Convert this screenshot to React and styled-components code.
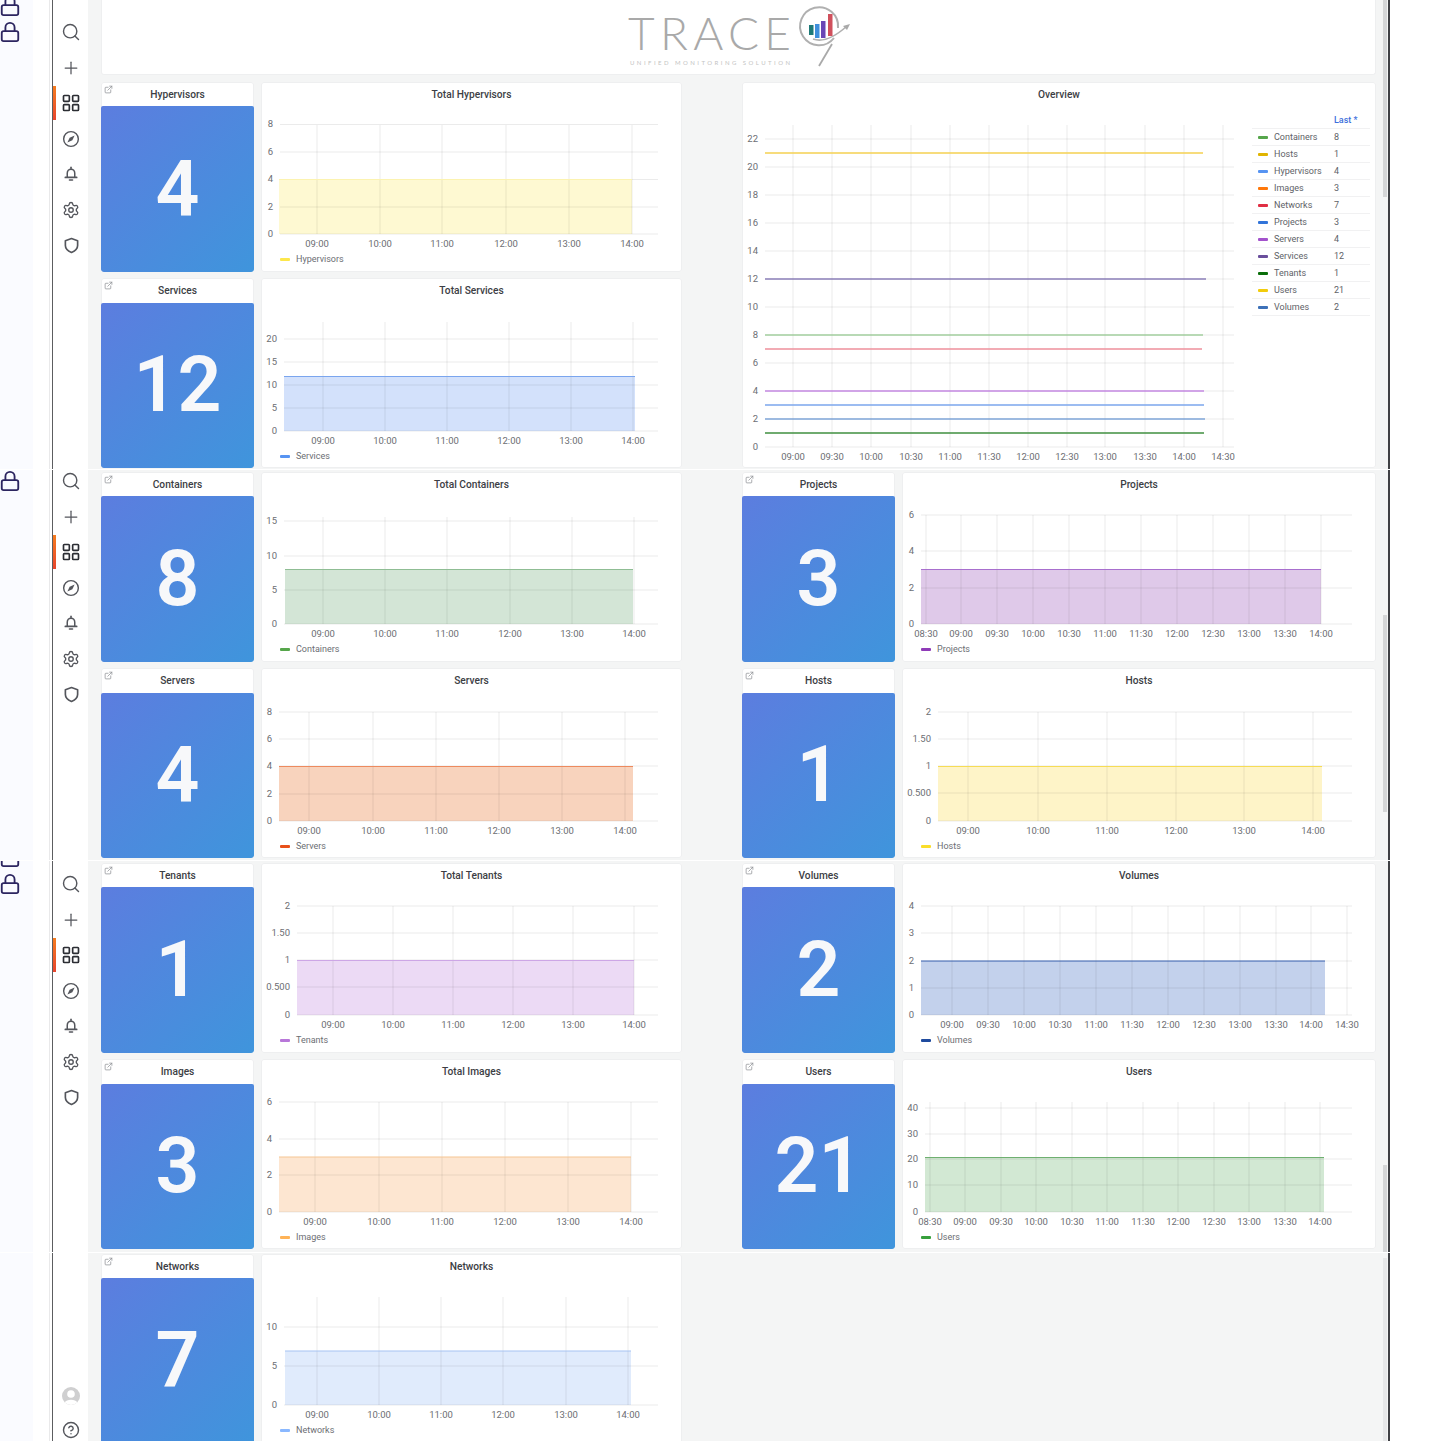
import React from "react";
import styled, { createGlobalStyle } from "styled-components";
import {
  Search,
  Plus,
  LayoutGrid,
  Settings,
  Lock,
  ExternalLink,
  CircleHelp,
} from "lucide-react";

const GlobalStyle = createGlobalStyle`
  html, body {
    margin: 0;
    background: #fff;
    font-family: Roboto, "Liberation Sans", sans-serif;
  }
  #root {
    height: 1441px;
    overflow: hidden;
  }
`;

const Section = styled.section`
  display: flex;
  box-sizing: border-box;
  width: 1430px;
  height: ${(p) => p.$height}px;
  overflow: hidden;
  border-top: ${(p) => (p.$divider ? "1px solid #fff" : "none")};
`;

const LockStrip = styled.div`
  flex: none;
  display: flex;
  flex-direction: column;
  gap: ${(p) => p.$gap || 0}px;
  box-sizing: border-box;
  width: 33px;
  margin-top: ${(p) => p.$offset || 0}px;
  color: #2c2560;
  background: #fafbff;
  svg {
    display: block;
    margin-left: -1px;
  }
`;

const Gutter = styled.div`
  flex: none;
  width: 19px;
  background: #fff linear-gradient(#e9e9ea, #e9e9ea) 16px 0 / 1px 100% no-repeat;
`;

const Sidebar = styled.nav`
  flex: none;
  display: flex;
  flex-direction: column;
  gap: 13.5px;
  box-sizing: border-box;
  width: 36px;
  padding-top: ${(p) => p.$top}px;
  background: #fff;
  border-left: 1.5px solid #5c5d60;
`;

const NavItem = styled.div`
  position: relative;
  display: flex;
  align-items: center;
  justify-content: center;
  height: 22px;
  color: ${(p) => (p.$active ? "#2b2d33" : "#54565c")};
  margin-right: -1px;

  ${(p) =>
    p.$active &&
    `&::before {
      content: "";
      position: absolute;
      left: 0;
      top: -6px;
      width: 3px;
      height: 34px;
      background: linear-gradient(#f57c1f, #e8452e);
    }`}
`;

const Main = styled.main`
  position: relative;
  flex: none;
  box-sizing: border-box;
  width: 1300px;
  padding: ${(p) => p.$top}px 12px 0 13px;
  background: #f4f5f5;
`;

const RightEdge = styled.div`
  flex: none;
  width: 1.5px;
  background: #3f4044;
`;

const Scrollbar = styled.div`
  position: absolute;
  right: 1px;
  top: ${(p) => p.$top}px;
  width: 4.5px;
  height: ${(p) => p.$height}px;
  background: ${(p) => p.$color || "#d5d6d7"};
`;

const Banner = styled.header`
  display: flex;
  justify-content: center;
  box-sizing: border-box;
  height: 75px;
  margin-bottom: 7px;
  background: #fff;
  border: 1px solid #eeeff0;
  border-top: none;
  border-radius: 0 0 3px 3px;
`;

const Dashboard = styled.div`
  display: grid;
  grid-template-columns: 581px 634px;
  column-gap: 60px;
`;

const Stack = styled.div`
  display: flex;
  flex-direction: column;
  gap: 6px;
`;

const MetricRow = styled.div`
  display: flex;
  gap: 7px;
  height: 190px;
`;

const Panel = styled.article`
  position: relative;
  display: flex;
  flex-direction: column;
  box-sizing: border-box;
  background: #fff;
  border-radius: 3px;
  box-shadow: 0 0 0 1px #eeeff0 inset;
  overflow: hidden;
`;

const StatPanel = styled(Panel)`
  flex: none;
  width: 153px;
`;

const ChartPanel = styled(Panel)`
  flex: 1;
  min-width: 0;
  svg {
    display: block;
  }
`;

const OverviewPanel = styled(Panel)`
  height: 386px;
`;

const PanelTitle = styled.h3`
  flex: none;
  margin: 0;
  height: ${(p) => (p.$tall ? 25 : 24)}px;
  line-height: 25px;
  text-align: center;
  font-size: 10.2px;
  font-weight: 500;
  color: #3c3e44;
`;

const LinkMark = styled.span`
  position: absolute;
  left: 3px;
  top: 3px;
  color: #8f9195;
  line-height: 0;
`;

const StatBlock = styled.div`
  flex: 1;
  display: flex;
  align-items: center;
  justify-content: center;
  border-radius: 2px;
  background: linear-gradient(135deg, #5c7ddf 0%, #3f95dc 100%);
  color: #f7f8fa;
  font-size: 77px;
  font-weight: 600;
  line-height: 1;
`;

const AxisText = styled.text`
  font-family: Roboto, "Liberation Sans", sans-serif;
  font-size: 9.5px;
  fill: #6c6e73;
`;

const KeyText = styled(AxisText)`
  font-size: 9px;
`;

const OverviewBody = styled.div`
  flex: 1;
  display: flex;
  min-height: 0;
  svg {
    flex: none;
    display: block;
  }
`;

const LegendTable = styled.div`
  flex: none;
  width: 118px;
  margin-left: 7px;
  padding-top: 6px;
  font-size: 9px;
  color: #606267;
`;

const LegendHead = styled.div`
  height: 16px;
  line-height: 16px;
  padding-left: 82px;
  color: #3d6fdc;
  font-weight: 500;
`;

const LegendRow = styled.div`
  display: flex;
  align-items: center;
  box-sizing: border-box;
  height: 17px;
  border-top: 1px solid #f1f1f2;
  &:last-child {
    border-bottom: 1px solid #f1f1f2;
    height: 18px;
  }
`;

const Swatch = styled.i`
  flex: none;
  width: 10px;
  height: 3px;
  margin: 0 6px;
  border-radius: 1px;
  background: ${(p) => p.$color};
`;

const LegendName = styled.span`
  width: 60px;
`;

const AvatarCircle = styled.span`
  display: block;
  line-height: 0;
`;

const clockTicks = (labels, xs) => labels.map((label, i) => [label, xs[i]]);

const HOURS = ["09:00", "10:00", "11:00", "12:00", "13:00", "14:00"];
const HALF_HOURS = ["08:30", "09:00", "09:30", "10:00", "10:30", "11:00", "11:30", "12:00", "12:30", "13:00", "13:30", "14:00"];
const VOLUME_HOURS = ["09:00", "09:30", "10:00", "10:30", "11:00", "11:30", "12:00", "12:30", "13:00", "13:30", "14:00", "14:30"];

const CHARTS = {
  hypervisors: {
    title: "Total Hypervisors", stat: "Hypervisors", value: "4", legend: "Hypervisors",
    origin: [261, 82], width: 421, left: 280, top: 125,
    y: [["8", 124.5], ["6", 152], ["4", 179.5], ["2", 207], ["0", 234]],
    x: clockTicks(HOURS, [317, 380, 442, 506, 569, 632]),
    area: [279, 632, 179.5, 234], fill: "#fef9d2", line: "#fcf3b0", key: "#fde74c",
  },
  services: {
    title: "Total Services", stat: "Services", value: "12", legend: "Services", tall: true,
    origin: [261, 278], width: 421, left: 284, top: 322,
    y: [["20", 339], ["15", 362], ["10", 385], ["5", 408], ["0", 431]],
    x: clockTicks(HOURS, [323, 385, 447, 509, 571, 633]),
    area: [284, 635, 376.5, 431], fill: "#d3e1fb", line: "#7aa5ee", key: "#5794f2",
  },
  containers: {
    title: "Total Containers", stat: "Containers", value: "8", legend: "Containers",
    origin: [261, 472], width: 421, left: 284, top: 517,
    y: [["15", 521], ["10", 556], ["5", 590], ["0", 624]],
    x: clockTicks(HOURS, [323, 385, 447, 510, 572, 634]),
    area: [285, 633, 569.5, 624], fill: "#d3e5d6", line: "#8fbd94", key: "#56a64b",
  },
  servers: {
    title: "Servers", stat: "Servers", value: "4", legend: "Servers", tall: true,
    origin: [261, 668], width: 421, left: 279, top: 712,
    y: [["8", 712], ["6", 739], ["4", 766], ["2", 794], ["0", 821]],
    x: clockTicks(HOURS, [309, 373, 436, 499, 562, 625]),
    area: [279, 633, 766.5, 821], fill: "#f8d3bd", line: "#ed8a5e", key: "#e8501a",
  },
  tenants: {
    title: "Total Tenants", stat: "Tenants", value: "1", legend: "Tenants",
    origin: [261, 863], width: 421, left: 297, top: 906,
    y: [["2", 906], ["1.50", 933], ["1", 960], ["0.500", 987], ["0", 1015]],
    x: clockTicks(HOURS, [333, 393, 453, 513, 573, 634]),
    area: [297, 634, 960.5, 1015], fill: "#ecdaf5", line: "#cda6e6", key: "#b877d9",
  },
  images: {
    title: "Total Images", stat: "Images", value: "3", legend: "Images", tall: true,
    origin: [261, 1059], width: 421, left: 279, top: 1102,
    y: [["6", 1102], ["4", 1139], ["2", 1175], ["0", 1212]],
    x: clockTicks(HOURS, [315, 379, 442, 505, 568, 631]),
    area: [279, 631, 1157, 1212], fill: "#fde6d1", line: "#f5c593", key: "#ffb357",
  },
  networks: {
    title: "Networks", stat: "Networks", value: "7", legend: "Networks",
    origin: [261, 1254], width: 421, left: 284, top: 1297,
    y: [["10", 1327], ["5", 1366], ["0", 1405]],
    x: clockTicks(HOURS, [317, 379, 441, 503, 566, 628]),
    area: [285, 631, 1351, 1405], fill: "#e0ebfc", line: "#a5c3f2", key: "#8ab8ff",
  },
  projects: {
    title: "Projects", stat: "Projects", value: "3", legend: "Projects",
    origin: [902, 472], width: 474, left: 921, top: 515,
    y: [["6", 515], ["4", 551], ["2", 588], ["0", 624]],
    x: clockTicks(HALF_HOURS, [926, 961, 997, 1033, 1069, 1105, 1141, 1177, 1213, 1249, 1285, 1321]),
    area: [921, 1321, 569.5, 624], fill: "#dfc9e9", line: "#a86fce", key: "#8f3bb8",
  },
  hosts: {
    title: "Hosts", stat: "Hosts", value: "1", legend: "Hosts", tall: true,
    origin: [902, 668], width: 474, left: 938, top: 712,
    y: [["2", 712], ["1.50", 739], ["1", 766], ["0.500", 793], ["0", 821]],
    x: clockTicks(HOURS, [968, 1038, 1107, 1176, 1244, 1313]),
    area: [938, 1322, 766.5, 821], fill: "#fef4c8", line: "#f6dc55", key: "#fade2a",
  },
  volumes: {
    title: "Volumes", stat: "Volumes", value: "2", legend: "Volumes",
    origin: [902, 863], width: 474, left: 921, top: 906,
    y: [["4", 906], ["3", 933], ["2", 961], ["1", 988], ["0", 1015]],
    x: clockTicks(VOLUME_HOURS, [952, 988, 1024, 1060, 1096, 1132, 1168, 1204, 1240, 1276, 1311, 1347]),
    area: [921, 1325, 961, 1015], fill: "#c3d1ec", line: "#3d65b3", key: "#1f4b9e",
  },
  users: {
    title: "Users", stat: "Users", value: "21", legend: "Users", tall: true,
    origin: [902, 1059], width: 474, left: 925, top: 1102,
    y: [["40", 1108], ["30", 1134], ["20", 1159], ["10", 1185], ["0", 1212]],
    x: clockTicks(HALF_HOURS, [930, 965, 1001, 1036, 1072, 1107, 1143, 1178, 1214, 1249, 1285, 1320]),
    area: [925, 1324, 1157.5, 1212], fill: "#d2e8d3", line: "#6fb070", key: "#37a03c",
  },
};

const OVERVIEW_SERIES = [
  ["Containers", "8", "#56a64b"],
  ["Hosts", "1", "#e0b400"],
  ["Hypervisors", "4", "#5794f2"],
  ["Images", "3", "#ff780a"],
  ["Networks", "7", "#e02f44"],
  ["Projects", "3", "#3274d9"],
  ["Servers", "4", "#a352cc"],
  ["Services", "12", "#6a4f9c"],
  ["Tenants", "1", "#0a6e0a"],
  ["Users", "21", "#f2cc0c"],
  ["Volumes", "2", "#3d71b8"],
];

const OVERVIEW_LINES = [
  [153, 1203, "#f5d050"],
  [279, 1206, "#8b7fb8"],
  [335, 1203, "#a3cf9f"],
  [349, 1202, "#ee8f9b"],
  [391, 1204, "#c588e2"],
  [405, 1204, "#7ba6ec"],
  [419, 1205, "#7fa6d8"],
  [433, 1204, "#3f8f3f"],
];

const GRID = "rgba(0,0,0,0.08)";

const AreaChart = ({ chart }) => {
  const [ox, oy] = chart.origin;
  const [x0, x1, top, bottom] = chart.area;
  const plotBottom = chart.y[chart.y.length - 1][1];
  const right = chart.width === 421 ? 658 : 1352;
  return (
    <svg width={chart.width} height="166" viewBox={`${ox} ${oy + 24} ${chart.width} 166`}>
      <rect x={x0} y={top} width={x1 - x0} height={bottom - top} fill={chart.fill} />
      {chart.y.map(([label, y]) => (
        <g key={label}>
          <line x1={chart.left} x2={right} y1={y} y2={y} stroke={GRID} />
          <AxisText x={chart.left - 7} y={y + 2.5} textAnchor="end">{label}</AxisText>
        </g>
      ))}
      {chart.x.map(([label, x]) => (
        <g key={label}>
          <line x1={x} x2={x} y1={chart.top} y2={plotBottom} stroke={GRID} />
          <AxisText x={x} y={bottom + 13} textAnchor="middle">{label}</AxisText>
        </g>
      ))}
      <line x1={x0} x2={x1} y1={top} y2={top} stroke={chart.line} />
      <rect x={ox + 19} y={bottom + 24} width="10" height="3" rx="1" fill={chart.key} />
      <KeyText x={ox + 35} y={bottom + 28}>{chart.legend}</KeyText>
    </svg>
  );
};

const OverviewChart = () => {
  const yLabels = [22, 20, 18, 16, 14, 12, 10, 8, 6, 4, 2, 0];
  const xLabels = clockTicks(VOLUME_HOURS, [793, 832, 871, 911, 950, 989, 1028, 1067, 1105, 1145, 1184, 1223]);
  return (
    <svg width="503" height="362" viewBox="742 106 503 362">
      {yLabels.map((label, i) => (
        <g key={label}>
          <line x1="765" x2="1234" y1={139 + i * 28} y2={139 + i * 28} stroke={GRID} />
          <AxisText x="758" y={141.5 + i * 28} textAnchor="end">{label}</AxisText>
        </g>
      ))}
      {xLabels.map(([label, x]) => (
        <g key={label}>
          <line x1={x} x2={x} y1="125" y2="447" stroke={GRID} />
          <AxisText x={x} y="460" textAnchor="middle">{label}</AxisText>
        </g>
      ))}
      {OVERVIEW_LINES.map(([y, end, color]) => (
        <line key={y} x1="765" x2={end} y1={y} y2={y} stroke={color} strokeWidth="1.3" />
      ))}
    </svg>
  );
};

const Metric = ({ id }) => {
  const chart = CHARTS[id];
  return (
    <MetricRow>
      <StatPanel>
        <LinkMark><ExternalLink size={9} /></LinkMark>
        <PanelTitle $tall={chart.tall}>{chart.stat}</PanelTitle>
        <StatBlock>{chart.value}</StatBlock>
      </StatPanel>
      <ChartPanel>
        <PanelTitle>{chart.title}</PanelTitle>
        <AreaChart chart={chart} />
      </ChartPanel>
    </MetricRow>
  );
};

const TraceLogo = () => (
  <svg width="226" height="70" viewBox="625 0 226 70">
    <text x="627" y="50" fontFamily="Lato, sans-serif" fontWeight="300" fontSize="46" fill="#a9a9a9" textLength="163">TRACE</text>
    <text x="629" y="65" fontFamily="Lato, sans-serif" fontSize="6" fill="#c4c4c4" textLength="160">UNIFIED MONITORING SOLUTION</text>
    <path d="M833 38 A19 19 0 1 1 837 28" fill="none" stroke="#b0b0b0" strokeWidth="2" />
    <path d="M812 39 Q826 44 846 26" fill="none" stroke="#b0b0b0" strokeWidth="1.6" />
    <path d="M849 24 L842 26 L846 30 Z" fill="#a9a9a9" />
    <path d="M831 44 L818 66" stroke="#a9a9a9" strokeWidth="1.8" />
    <rect x="808" y="25" width="4.5" height="10" fill="#1f7a78" />
    <rect x="814" y="24" width="4.5" height="14" fill="#3f8fdc" />
    <rect x="820" y="21" width="4.5" height="17" fill="#6a45b5" />
    <rect x="827" y="14" width="4.5" height="22" fill="#d0505c" />
  </svg>
);

const Locks = ({ count = 1, offset, gap }) => (
  <LockStrip $offset={offset} $gap={gap}>
    {Array.from({ length: count }).map((_, i) => (
      <Lock key={i} size={22} strokeWidth={2} />
    ))}
  </LockStrip>
);

const CompassMark = () => (
  <svg width="18" height="18" viewBox="0 0 24 24" fill="none" stroke="currentColor" strokeWidth="1.9">
    <circle cx="12" cy="12" r="9.8" />
    <path d="M16.8 7.2 L13.8 13.8 L7.2 16.8 L10.2 10.2 Z" fill="currentColor" stroke="none" />
  </svg>
);

const BellMark = () => (
  <svg width="18" height="18" viewBox="0 0 24 24" fill="none" stroke="currentColor" strokeWidth="2" strokeLinecap="round" strokeLinejoin="round">
    <path d="M12 3 V5" />
    <path d="M7 15.5 V11 C7 8 9.2 5.5 12 5.5 C14.8 5.5 17 8 17 11 V15.5" />
    <path d="M4.5 16.5 H19.5" strokeWidth="2.4" />
    <path d="M10 20 H14" strokeWidth="2.2" />
  </svg>
);

const ShieldMark = () => (
  <svg width="21" height="21" viewBox="0 0 24 24" fill="none" stroke="currentColor" strokeWidth="1.9" strokeLinejoin="round">
    <path d="M12 4 L19 6.5 V12 C19 16 15.5 18.5 12 20 C8.5 18.5 5 16 5 12 V6.5 Z" />
  </svg>
);

const NavIcons = ({ top }) => (
  <Sidebar $top={top}>
    <NavItem><Search size={20} strokeWidth={1.7} /></NavItem>
    <NavItem><Plus size={20} strokeWidth={1.5} /></NavItem>
    <NavItem $active><LayoutGrid size={20} strokeWidth={2} /></NavItem>
    <NavItem><CompassMark /></NavItem>
    <NavItem><BellMark /></NavItem>
    <NavItem><Settings size={18} strokeWidth={1.8} /></NavItem>
    <NavItem><ShieldMark /></NavItem>
  </Sidebar>
);

const Avatar = () => (
  <AvatarCircle>
    <svg width="18" height="18" viewBox="0 0 18 18">
      <circle cx="9" cy="9" r="9" fill="#cfcfd0" />
      <circle cx="9" cy="7" r="3.8" fill="#fff" />
      <path d="M2.8 15.5 C4 11.8 14 11.8 15.2 15.5 A9 9 0 0 1 2.8 15.5 Z" fill="#fff" />
    </svg>
  </AvatarCircle>
);

const App = () => (
  <>
    <GlobalStyle />
    <Section $height={469}>
      <Locks count={2} offset={-5} gap={4} />
      <Gutter />
      <NavIcons top={21} />
      <Main $top={0}>
        <Scrollbar $top={0} $height={197} />
        <Banner><TraceLogo /></Banner>
        <Dashboard>
          <Stack>
            <Metric id="hypervisors" />
            <Metric id="services" />
          </Stack>
          <OverviewPanel>
            <PanelTitle>Overview</PanelTitle>
            <OverviewBody>
              <OverviewChart />
              <LegendTable>
                <LegendHead>Last *</LegendHead>
                {OVERVIEW_SERIES.map(([name, value, color]) => (
                  <LegendRow key={name}>
                    <Swatch $color={color} />
                    <LegendName>{name}</LegendName>
                    <span>{value}</span>
                  </LegendRow>
                ))}
              </LegendTable>
            </OverviewBody>
          </OverviewPanel>
        </Dashboard>
      </Main>
      <RightEdge />
    </Section>

    <Section $height={391} $divider>
      <Locks />
      <Gutter />
      <NavIcons top={0} />
      <Main $top={2}>
        <Scrollbar $top={145} $height={197} />
        <Dashboard>
          <Stack>
            <Metric id="containers" />
            <Metric id="servers" />
          </Stack>
          <Stack>
            <Metric id="projects" />
            <Metric id="hosts" />
          </Stack>
        </Dashboard>
      </Main>
      <RightEdge />
    </Section>

    <Section $height={392} $divider>
      <Locks count={2} offset={-15} gap={5} />
      <Gutter />
      <NavIcons top={12} />
      <Main $top={2}>
        <Scrollbar $top={304} $height={87} />
        <Dashboard>
          <Stack>
            <Metric id="tenants" />
            <Metric id="images" />
          </Stack>
          <Stack>
            <Metric id="volumes" />
            <Metric id="users" />
          </Stack>
        </Dashboard>
      </Main>
      <RightEdge />
    </Section>

    <Section $height={189} $divider>
      <LockStrip />
      <Gutter />
      <Sidebar $top={132}>
        <NavItem><Avatar /></NavItem>
        <NavItem><CircleHelp size={18} strokeWidth={1.9} /></NavItem>
      </Sidebar>
      <Main $top={1}>
        <Scrollbar $top={5} $height={183} $color="#e6e7e8" />
        <Dashboard>
          <Stack>
            <Metric id="networks" />
          </Stack>
        </Dashboard>
      </Main>
      <RightEdge />
    </Section>
  </>
);

export default App;
